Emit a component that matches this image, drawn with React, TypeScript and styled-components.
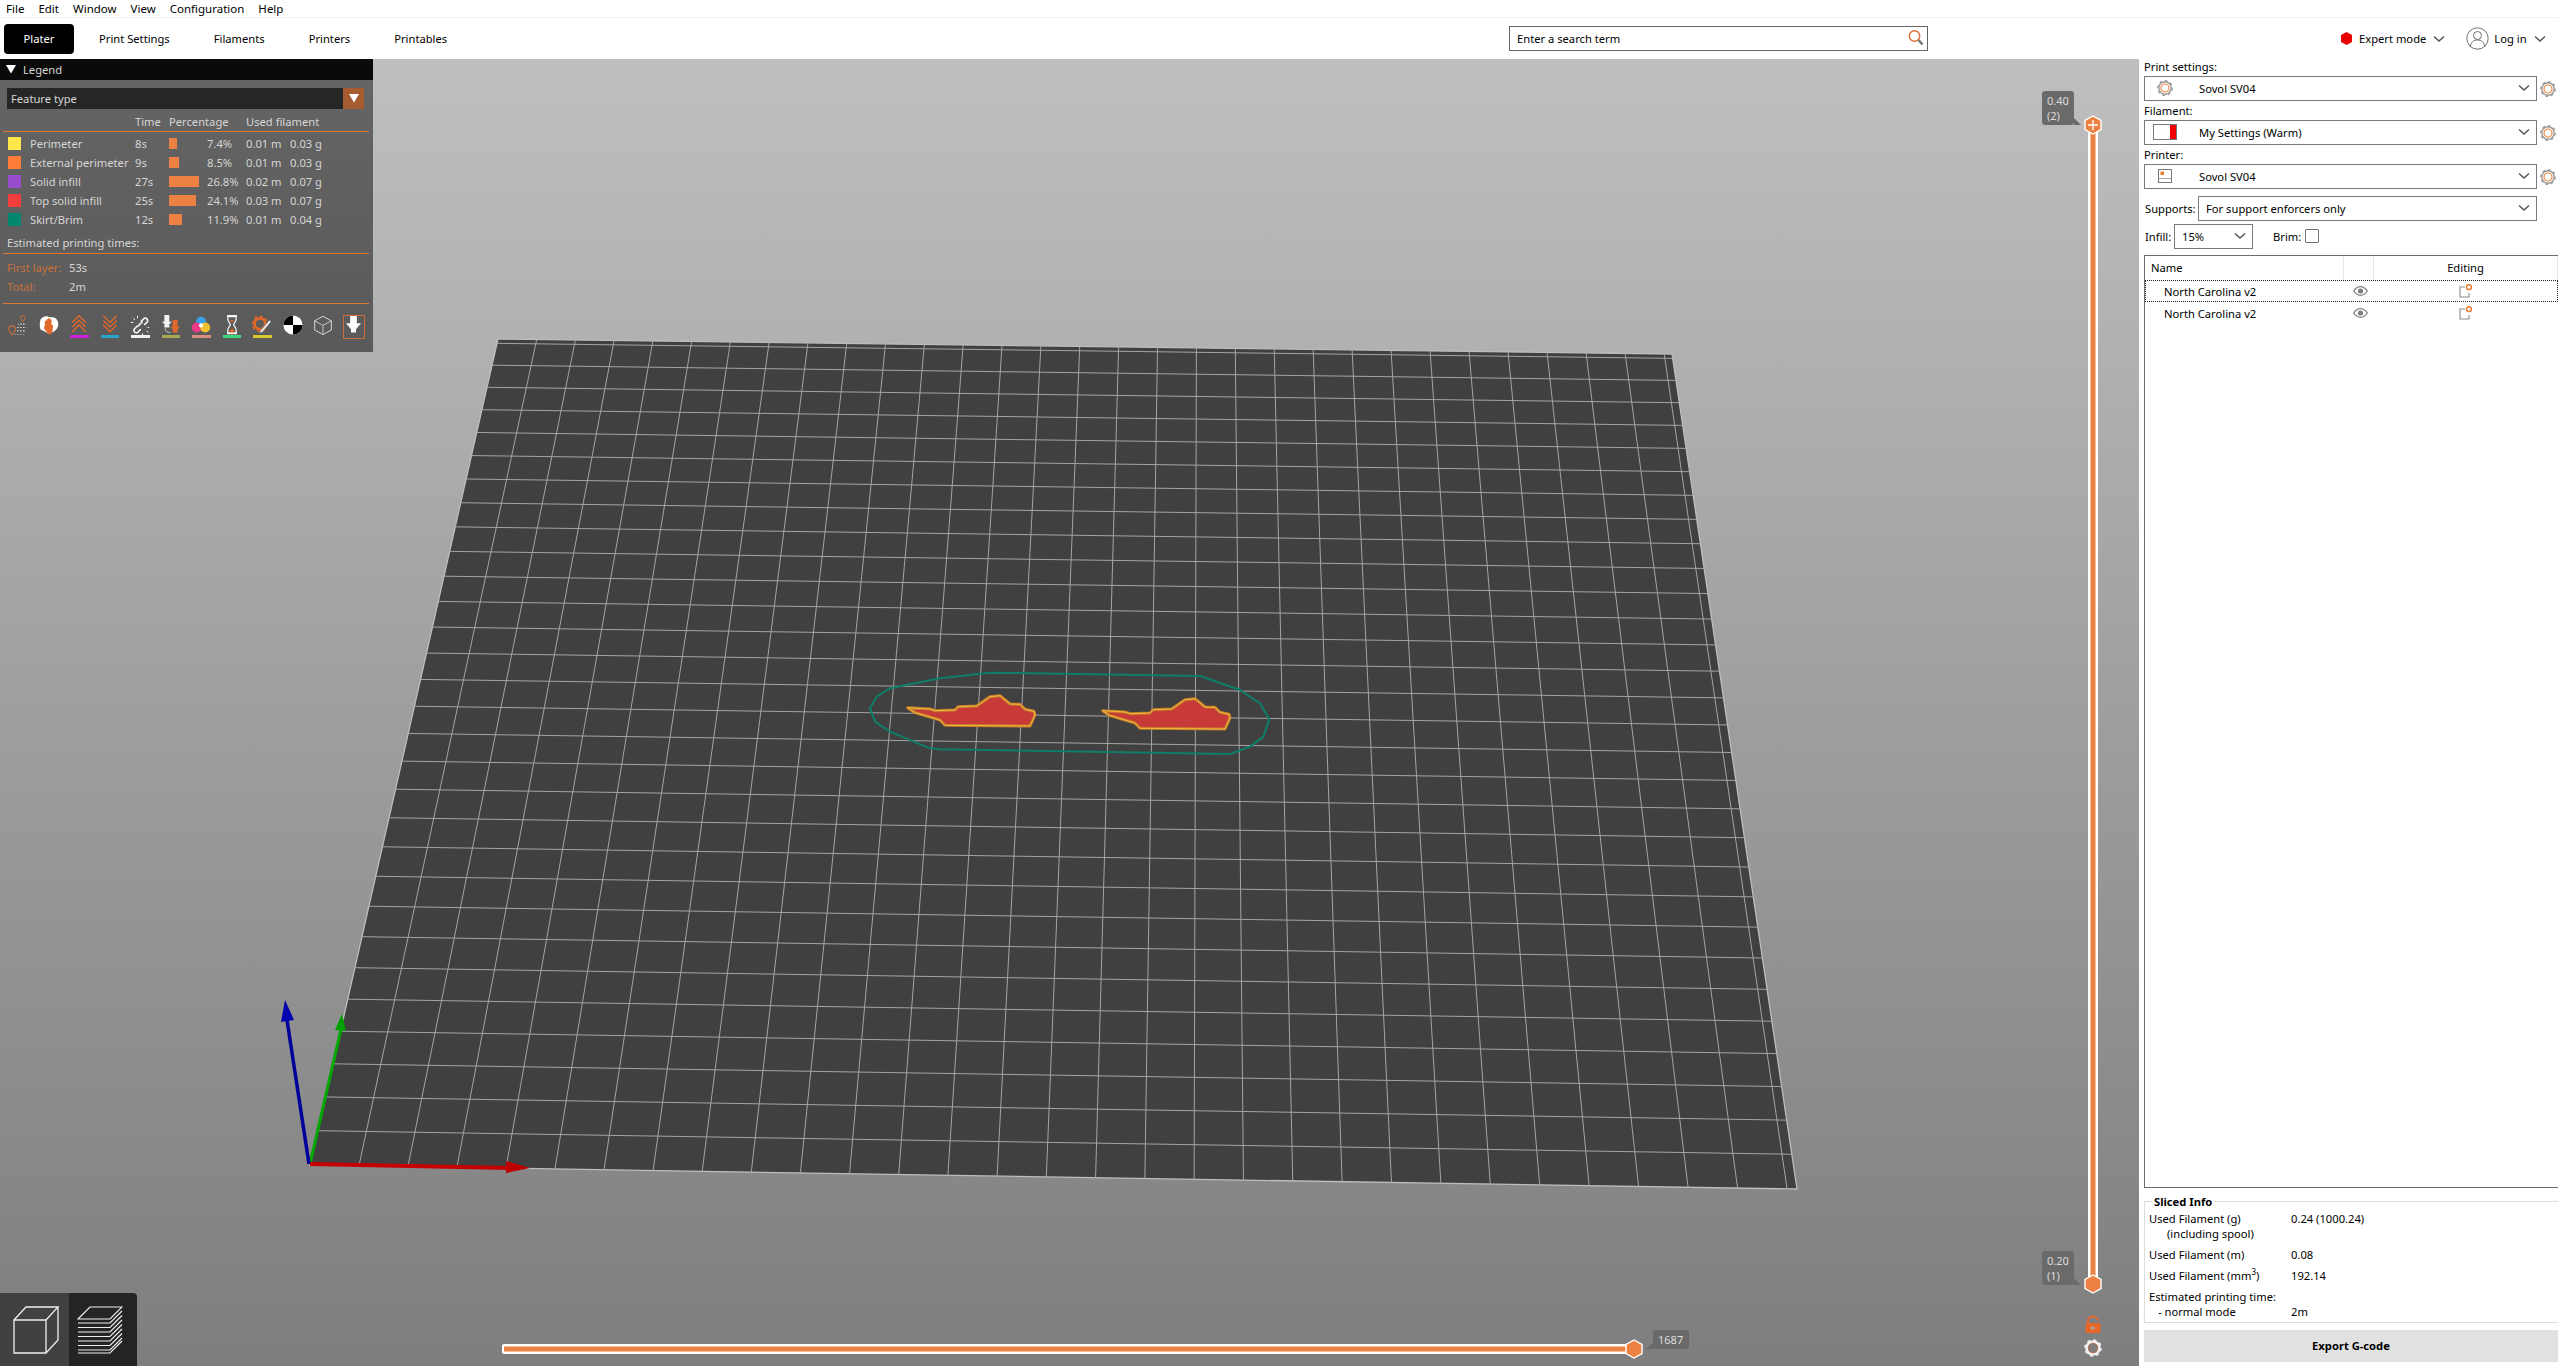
import { Fragment } from "react";
import styled, { createGlobalStyle } from "styled-components";
import type { ReactNode } from "react";

const UI_FONT = `"Noto Sans", "Open Sans", sans-serif`;

const GlobalStyle = createGlobalStyle`
  html, body { margin: 0; padding: 0; height: 100%; overflow: hidden; }
  body { font-family: ${UI_FONT}; font-size: 11.2px; color: #000; background: #fff; }
  #root { height: 100%; }
`;

/* ---------- window chrome ---------- */

const Page = styled.div`
  display: flex;
  flex-direction: column;
  height: 1366px;
  width: 2558px;
`;

const MenuBar = styled.div`
  display: flex;
  gap: 14px;
  height: 16px;
  padding-left: 6px;
  padding-bottom: 1px;
  box-sizing: content-box;
  margin-bottom: -1px;
  align-items: center;
  background: #fff;
  border-bottom: 2px solid #f0f0f0;
  font-size: 11.5px;
`;

const TabBar = styled.div`
  display: flex;
  align-items: center;
  height: 41px;
  background: #fff;
`;

const Tabs = styled.div`
  display: flex;
  align-items: center;
  padding-left: 4px;
  width: 1505px;
`;

const Tab = styled.div<{ $active?: boolean }>`
  height: 30px;
  line-height: 30px;
  text-align: center;
  width: ${({ $active }) => ($active ? "70px" : "auto")};
  margin-right: ${({ $active }) => ($active ? "25px" : "44px")};
  border-radius: 4px;
  background: ${({ $active }) => ($active ? "#000" : "transparent")};
  color: ${({ $active }) => ($active ? "#fff" : "#000")};
`;

const SearchBox = styled.div`
  width: 419px;
  height: 25px;
  box-sizing: border-box;
  border: 1px solid #666;
  display: flex;
  align-items: center;
  justify-content: space-between;
  padding: 0 2px 1px 7px;
`;

const ModeArea = styled.div`
  display: flex;
  align-items: center;
  margin-left: 412px;
`;

const ModeLabel = styled.span`
  margin: 0 6px;
`;

const UserSlot = styled.span`
  display: flex;
  margin: 0 -1px 0 20px;
`;

const Main = styled.div`
  flex: 1;
  display: flex;
  min-height: 0;
`;

/* ---------- 3D view ---------- */

const Viewport = styled.div`
  position: relative;
  width: 2139px;
  background: linear-gradient(#bfbfbf, #7e7e7e);
  overflow: hidden;
`;

const Scene = styled.svg`
  position: absolute;
  inset: 0;
  width: 100%;
  height: 100%;
`;

const SliderTip = styled.div<{ $x: number; $y: number; $w: number; $h: number }>`
  position: absolute;
  left: ${({ $x }) => $x}px;
  top: ${({ $y }) => $y}px;
  width: ${({ $w }) => $w}px;
  height: ${({ $h }) => $h}px;
  box-sizing: border-box;
  padding: 2px 5px;
  background: #6a6a6a;
  border-radius: 3px;
  color: #dcdcdc;
  font-size: 11px;
  line-height: 15px;
`;

const ViewToolbar = styled.div`
  position: absolute;
  left: 0;
  bottom: 0;
  display: flex;
  height: 73px;
  border-top-right-radius: 4px;
  overflow: hidden;
`;

const ViewButton = styled.div<{ $active?: boolean }>`
  width: ${({ $active }) => ($active ? "69px" : "68px")};
  box-sizing: border-box;
  padding: ${({ $active }) => ($active ? "0 0 0 3px" : "0 6px 0 0")};
  display: flex;
  align-items: center;
  justify-content: center;
  background: ${({ $active }) => ($active ? "#414141" : "#242424")};
`;

/* ---------- legend ---------- */

const Legend = styled.div`
  position: absolute;
  left: 0;
  top: 0;
  width: 373px;
  height: 293px;
  background: linear-gradient(#656565, #5a5a5a);
  color: #d6d6d6;
`;

const LegendTitle = styled.div`
  display: flex;
  align-items: center;
  gap: 7px;
  height: 21px;
  padding-left: 6px;
  background: #0a0a0a;
`;

const LegendCombo = styled.div`
  display: flex;
  justify-content: space-between;
  align-items: center;
  height: 21px;
  margin: 8px 9px 3px 7px;
  padding-left: 4px;
  background: #262626;
`;

const ComboArrow = styled.div`
  width: 21px;
  height: 21px;
  display: flex;
  align-items: center;
  justify-content: center;
  background: #a65b30;
`;

const LegendGrid = styled.div<{ $top?: number }>`
  display: grid;
  grid-template-columns: 22px 105px 34px 38px 39px 44px 1fr;
  padding-left: 8px;
  margin-top: ${({ $top }) => $top ?? 0}px;
  grid-auto-rows: 19px;
  align-items: center;
`;

const HeaderCell = styled.span<{ $span?: number }>`
  grid-column: span ${({ $span }) => $span ?? 1};
  white-space: nowrap;
`;

const Swatch = styled.span<{ $color: string }>`
  width: 13px;
  height: 13px;
  background: ${({ $color }) => $color};
`;

const Bar = styled.span`
  display: block;
  height: 11px;
  background: #ed8043;
`;

const Rule = styled.div<{ $top?: number }>`
  height: 1px;
  margin: ${({ $top }) => $top ?? 0}px 4px 0 3px;
  background: #e0762e;
`;

const EstimatedTitle = styled.div`
  height: 19px;
  line-height: 18px;
  padding-left: 7px;
  margin-top: 5px;
`;

const TimeRow = styled.div<{ $top?: number }>`
  display: flex;
  height: 19px;
  line-height: 19px;
  padding-left: 7px;
  margin-top: ${({ $top }) => $top ?? 0}px;
`;

const TimeLabel = styled.span`
  width: 62px;
  color: #c8703a;
`;

const IconBar = styled.div`
  display: flex;
  padding: 11px 0 0 3px;
`;

const IconCell = styled.div`
  position: relative;
  width: 30.5px;
  height: 24px;
  display: flex;
  justify-content: center;
  box-sizing: border-box;
`;

const IconLine = styled.span<{ $color: string }>`
  position: absolute;
  left: 6px;
  right: 6px;
  top: 20px;
  height: 2.5px;
  background: ${({ $color }) => $color};
`;

const SelectedFrame = styled.span`
  position: absolute;
  left: 4px;
  right: 4px;
  top: 0;
  height: 22px;
  border: 1px solid #c8703a;
`;

/* ---------- right sidebar ---------- */

const Sidebar = styled.aside`
  flex: 1;
  display: flex;
  flex-direction: column;
  background: #fff;
  padding: 0 0 4px 5px;
  min-width: 0;
`;

const PresetGroup = styled.div`
  margin-bottom: 2px;
`;

const PresetLabel = styled.div`
  height: 17px;
  line-height: 15px;
`;

const PresetRow = styled.div`
  display: flex;
  align-items: center;
`;

const Combo = styled.div<{ $width?: number }>`
  ${({ $width }) => ($width ? `width: ${$width}px;` : "flex: 1;")}
  height: 25px;
  box-sizing: border-box;
  border: 1px solid #7a7a7a;
  display: flex;
  align-items: center;
  justify-content: space-between;
  padding: 0 5px 1px 7px;
`;

const ComboValue = styled.div`
  display: flex;
  align-items: center;
`;

const PresetIcon = styled.span`
  width: 47px;
  margin-left: -2px;
  margin-right: 2px;
  display: flex;
  justify-content: center;
  padding-right: 17px;
  box-sizing: border-box;
`;

const GearSlot = styled.div`
  width: 21px;
  display: flex;
  justify-content: center;
`;

const OptionRow = styled.div<{ $top: number }>`
  display: flex;
  align-items: center;
  margin-top: ${({ $top }) => $top}px;
  padding-right: 21px;
`;

const OptionLabel = styled.span<{ $width: number }>`
  width: ${({ $width }) => $width}px;
  padding: 0 0 1px 1px;
  box-sizing: border-box;
`;

const BrimLabel = styled.span`
  margin: 0 4px 1px 20px;
`;

const CheckBox = styled.span`
  width: 14px;
  height: 14px;
  margin-bottom: 1px;
  box-sizing: border-box;
  border: 1px solid #777;
  border-radius: 1px;
`;

const ObjectTable = styled.div`
  flex: 1;
  margin-top: 6px;
  border: 1px solid #6e6e6e;
  border-right: 0;
`;

const TableHead = styled.div`
  display: grid;
  grid-template-columns: 199px 30px 1fr;
  height: 24px;
  line-height: 24px;
`;

const HeadCell = styled.div<{ $center?: boolean }>`
  border-right: 1px solid #e8e8e8;
  padding-left: ${({ $center }) => ($center ? 0 : 6)}px;
  text-align: ${({ $center }) => ($center ? "center" : "left")};
`;

const TableRow = styled.div<{ $focused?: boolean }>`
  display: grid;
  grid-template-columns: 199px 30px 1fr;
  align-items: center;
  height: 22px;
  box-sizing: border-box;
  border: 1px dotted ${({ $focused }) => ($focused ? "#222" : "transparent")};
`;

const RowName = styled.span`
  padding-left: 18px;
`;

const RowIcon = styled.span<{ $shift?: number }>`
  display: flex;
  justify-content: center;
  padding-right: ${({ $shift }) => $shift ?? 0}px;
`;

const SlicedBox = styled.div`
  margin-top: 13px;
  height: 122px;
  box-sizing: border-box;
  border: 1px solid #dcdcdc;
  border-right: 0;
`;

const SlicedTitle = styled.div`
  width: fit-content;
  margin: -8px 0 2px 7px;
  padding: 0 2px;
  background: #fff;
  font-weight: 700;
  line-height: 15px;
`;

const SlicedGrid = styled.div`
  display: grid;
  grid-template-columns: 142px 1fr;
  row-gap: 6px;
  padding-left: 4px;
  line-height: 15px;
`;

const Indented = styled.span<{ $indent: number }>`
  display: block;
  padding-left: ${({ $indent }) => $indent}px;
`;

const Cube = styled.sup`
  font-size: 8px;
  line-height: 0;
`;

const ExportButton = styled.div`
  margin-top: 7px;
  height: 32px;
  line-height: 32px;
  text-align: center;
  background: #e1e1e1;
  font-weight: 700;
`;

/* ---------- drawings ---------- */

type Pt = [number, number];

// 印刷ベッドの四隅（手前左, 手前右, 奥右, 奥左）から射影変換を作る
const makeBedProjection = (p0: Pt, p1: Pt, p2: Pt, p3: Pt) => {
  const dx1 = p1[0] - p2[0];
  const dx2 = p3[0] - p2[0];
  const sx = p0[0] - p1[0] + p2[0] - p3[0];
  const dy1 = p1[1] - p2[1];
  const dy2 = p3[1] - p2[1];
  const sy = p0[1] - p1[1] + p2[1] - p3[1];
  const den = dx1 * dy2 - dx2 * dy1;
  const g = (sx * dy2 - dx2 * sy) / den;
  const h = (dx1 * sy - sx * dy1) / den;
  const a = p1[0] - p0[0] + g * p1[0];
  const b = p3[0] - p0[0] + h * p3[0];
  const d = p1[1] - p0[1] + g * p1[1];
  const e = p3[1] - p0[1] + h * p3[1];
  return (u: number, v: number): Pt => {
    const w = g * u + h * v + 1;
    return [(a * u + b * v + p0[0]) / w, (d * u + e * v + p0[1]) / w];
  };
};

const BED: Pt[] = [[310, 1165], [1797, 1189], [1672, 354], [498, 339]];
const project = makeBedProjection(BED[0], BED[1], BED[2], BED[3]);
const CELL = 1 / 30.2;
const GRID_STEPS = Array.from({ length: 30 }, (_, i) => (i + 1) * CELL);

const toPoints = (pts: Pt[]) => pts.map(([x, y]) => `${x},${y}`).join(" ");

const fromZoom = (pts: Pt[], dx = 0, dy = 0) =>
  pts.map(([x, y]): Pt => [840 + (x + dx) / 3, 640 + (y + dy) / 3]);

const SKIRT = fromZoom([
  [90, 205], [110, 170], [150, 145], [300, 115], [450, 98], [1080, 108], [1200, 150], [1260, 190],
  [1288, 238], [1270, 290], [1230, 320], [1170, 342], [300, 328], [270, 325], [150, 275], [105, 245],
]);

const PART: Pt[] = [
  [203, 203], [270, 207], [285, 212], [345, 210], [355, 200], [410, 198], [450, 170], [480, 167],
  [510, 192], [540, 193], [555, 208], [582, 214], [585, 225], [570, 258], [315, 256], [300, 240],
  [260, 228], [225, 218],
];

const Part = ({ dx, dy }: { dx: number; dy: number }) => {
  const pts = toPoints(fromZoom(PART, dx, dy));
  return (
    <>
      <polygon points={pts} fill="#c73a38" stroke="#c9782c" strokeWidth={3} strokeLinejoin="round" />
      <polygon points={pts} fill="none" stroke="#efc43a" strokeWidth={0.9} strokeLinejoin="round" />
    </>
  );
};

const Thumb = ({ x, y }: { x: number; y: number }) => (
  <polygon
    points={toPoints([[x, y - 9], [x + 8, y - 4.5], [x + 8, y + 4.5], [x, y + 9], [x - 8, y + 4.5], [x - 8, y - 4.5]])}
    fill="#ed8043"
    stroke="#fff"
    strokeWidth={1.4}
  />
);

const SceneDrawing = () => (
  <Scene viewBox="0 59 2139 1307">
    <polygon points={toPoints(BED)} fill="#404040" stroke="#bdbdbd" strokeWidth={1.3} />
    {GRID_STEPS.map((t) => {
      const [a, b] = [project(t, 0), project(t, 1)];
      const [c, d] = [project(0, t), project(1, t)];
      return (
        <Fragment key={t}>
          <line x1={a[0]} y1={a[1]} x2={b[0]} y2={b[1]} stroke="#a4a4a4" strokeWidth={1} />
          <line x1={c[0]} y1={c[1]} x2={d[0]} y2={d[1]} stroke="#a4a4a4" strokeWidth={1} />
        </Fragment>
      );
    })}

    <polygon points={toPoints(SKIRT)} fill="none" stroke="#0d7f68" strokeWidth={2} strokeLinejoin="round" />
    <Part dx={0} dy={0} />
    <Part dx={585} dy={9} />

    {/* axes */}
    <line x1={310} y1={1164} x2={342} y2={1025} stroke="#00a800" strokeWidth={3} />
    <polygon points="342,1014 346,1031 335,1030" fill="#00a000" />
    <line x1={309} y1={1164} x2={287} y2={1020} stroke="#00009a" strokeWidth={3.5} />
    <polygon points="285,1000 294,1020 281,1022" fill="#0000b0" />
    <line x1={310} y1={1164} x2={510} y2={1168} stroke="#c40000" strokeWidth={4} />
    <polygon points="530,1168 506,1161 506,1173" fill="#c00000" />

    {/* layer slider */}
    <rect x={2088} y={125} width={10} height={1159} rx={2} fill="#fff" />
    <rect x={2090.5} y={125} width={5} height={1159} fill="#ed8043" />
    <Thumb x={2093} y={125} />
    <path d="M2093 120v10M2088 125h10" stroke="#fff" strokeWidth={1.4} />
    <Thumb x={2093} y={1284} />

    {/* move slider */}
    <rect x={502} y={1344} width={1132} height={10} rx={2} fill="#fff" />
    <rect x={504} y={1346.5} width={1130} height={5} fill="#ed8043" />
    <Thumb x={1634} y={1349} />

    {/* tooltip tails */}
    <polygon points="2074,1285 2081,1285 2074,1278" fill="#6a6a6a" />
    <polygon points="2074,125 2081,125 2074,118" fill="#6a6a6a" />
    <polygon points="1646,1349 1653,1349 1653,1343" fill="#6a6a6a" />

    {/* lock */}
    <path d="M2088 1323v-2.500a5 4 0 0 1 10 0" fill="none" stroke="#e8682a" strokeWidth={2} />
    <rect x={2085.5} y={1323} width={15} height={10} rx={2} fill="#e8682a" />
    <path d="M2091 1326l5 2-5 2z" fill="#a8a8a8" />
    <g transform="translate(2084 1339)">
      <circle cx={9} cy={9} r={6.5} fill="none" stroke="#f2f2f2" strokeWidth={2.6} />
      <circle cx={9} cy={9} r={8} fill="none" stroke="#f2f2f2" strokeWidth={1.6} strokeDasharray="3 3.3" />
      <circle cx={9} cy={9} r={4.6} fill="none" stroke="#e8682a" strokeWidth={1} strokeDasharray="2 1.5" />
    </g>
  </Scene>
);

const Chevron = () => (
  <svg width={14} height={8} viewBox="0 0 14 8">
    <path d="M2 1.5 7 6l5-4.5" fill="none" stroke="#555" strokeWidth={1.5} />
  </svg>
);

const Gear = () => (
  <svg width={16} height={16} viewBox="0 0 16 16">
    <circle cx={8} cy={8} r={6.2} fill="#fff" stroke="#9a9a9a" strokeWidth={1.4} />
    <circle cx={8} cy={8} r={7.2} fill="none" stroke="#9a9a9a" strokeWidth={1.4} strokeDasharray="2.6 3" />
    <circle cx={8} cy={8} r={4} fill="none" stroke="#ee8a4a" strokeWidth={1.2} />
  </svg>
);

const FilamentSwatch = () => (
  <svg width={24} height={16} viewBox="0 0 24 16">
    <rect x={0.5} y={0.5} width={23} height={15} fill="#fff" stroke="#777" />
    <rect x={17} y={1} width={6} height={14} fill="#f00000" />
  </svg>
);

const PrinterGlyph = () => (
  <svg width={14} height={14} viewBox="0 0 14 14">
    <rect x={0.5} y={0.5} width={13} height={13} fill="#fff" stroke="#777" />
    <path d="M1 9.5h12" stroke="#aaa" />
    <rect x={2.5} y={2.5} width={3.5} height={3.5} fill="#ed7a35" />
  </svg>
);

const Eye = () => (
  <svg width={15} height={10} viewBox="0 0 15 10">
    <path d="M.7 5C3 1.6 5.2.7 7.5.7S12 1.6 14.3 5C12 8.4 9.8 9.3 7.5 9.3S3 8.4.7 5Z" fill="#fff" stroke="#808080" strokeWidth={1.3} />
    <circle cx={7.5} cy={5} r={2.6} fill="#808080" />
  </svg>
);

const EditGlyph = () => (
  <svg width={14} height={14} viewBox="0 0 14 14">
    <path d="M6 3H1v10h9V9" fill="none" stroke="#8a8a8a" strokeWidth={1.1} />
    <circle cx={10} cy={3.2} r={2.4} fill="#fff" stroke="#ed7a35" strokeWidth={1.5} />
  </svg>
);

const SearchGlyph = () => (
  <svg width={18} height={18} viewBox="0 0 18 18">
    <circle cx={7.5} cy={7} r={5.2} fill="none" stroke="#e0703a" strokeWidth={1.5} />
    <path d="M11.5 11 15.5 15.5" stroke="#777" strokeWidth={2.6} />
  </svg>
);

const UserGlyph = () => (
  <svg width={23} height={23} viewBox="0 0 23 23">
    <circle cx={11.5} cy={11.5} r={10.7} fill="none" stroke="#707070" />
    <circle cx={11.5} cy={8.5} r={4} fill="none" stroke="#707070" />
    <path d="M4.5 19c.5-4 3-6 7-6s6.500 2 7 6" fill="none" stroke="#707070" />
  </svg>
);

const ModeDot = () => (
  <svg width={13} height={13} viewBox="0 0 13 13">
    <polygon points="6.500,0 12,3 12,10 6.500,13 1,10 1,3" fill="#e80000" />
  </svg>
);

const DownTriangle = ({ size }: { size: number }) => (
  <svg width={size} height={size * 0.85} viewBox="0 0 10 8.500">
    <polygon points="0,0 10,0 5,8.500" fill="#fff" />
  </svg>
);

const Nozzle = ({ color, x = 0, y = 0 }: { color: string; x?: number; y?: number }) => (
  <path
    transform={`translate(${x} ${y})`}
    d="M3 0h6v8h3l-4 4h1v3H3v-3h1L0 8h3Z"
    fill={color}
  />
);

const Glyph = ({ children }: { children: ReactNode }) => (
  <svg width={20} height={20} viewBox="0 0 24 24">{children}</svg>
);

const Chevrons = ({ up }: { up: boolean }) => (
  <g fill="none" stroke="#e0682a" strokeWidth={1.7} transform={up ? undefined : "matrix(1 0 0 -1 0 21)"}>
    <path d="M4 9 12 1l8 8" />
    <path d="M4 14.500 12 6.500l8 8" />
    <path d="M4 20 12 12l8 8" />
  </g>
);

const VIEW_ICONS: { line?: string; selected?: boolean; glyph: ReactNode }[] = [
  {
    glyph: (
      <Glyph>
        <path d="M5 24c-3-4-4-5-4-7a4 4 0 0 1 8 0c0 2-1 3-4 7Z" fill="none" stroke="#c8703a" strokeWidth={1.4} />
        <path d="M18 8c-2-3-2.500-3.500-2.500-5a2.500 2.500 0 0 1 5 0c0 1.500-.5 2-2.500 5Z" fill="none" stroke="#c8703a" strokeWidth={1.2} />
        <path d="M20 11h-8M11 15h11M11 19h10M7 24h14" stroke="#cfcfcf" strokeWidth={1.4} strokeDasharray="2 1.500" />
      </Glyph>
    ),
  },
  {
    glyph: (
      <Glyph>
        <path d="M2 5c3-3 6-4 9-3s7 0 9 2 4 5 3 9-2 4-4 6-6 3-8 3-3-2-6-3-4-2-4-6 0-5 1-8Z" fill="#fff" />
        <path d="M7 12V7h2v4-6h2v6-7h2v7-6h2v7h2l-1 8-2 3H11l-2-3-3-4Z" fill="#e0682a" />
      </Glyph>
    ),
  },
  { line: "#cf1fdc", glyph: <Glyph><Chevrons up /></Glyph> },
  { line: "#2aa5c9", glyph: <Glyph><Chevrons up={false} /></Glyph> },
  {
    line: "#f2f2f2",
    glyph: (
      <Glyph>
        <path d="M10 14l-4 4a3 3 0 0 0 4 4l4-4M14 9l4-4a3 3 0 0 1 4 4l-4 4" fill="none" stroke="#f2f2f2" strokeWidth={2} transform="translate(-1 -1)" />
        <path d="M9 14l6-6" stroke="#f2f2f2" strokeWidth={2} />
        <path d="M4 4l2 2M9 1v3M1 9h3M20 19l2 2M15 22v2M21 15h2" stroke="#f2f2f2" strokeWidth={1.2} />
      </Glyph>
    ),
  },
  {
    line: "#a8a855",
    glyph: (
      <Glyph>
        <Nozzle color="#f2f2f2" x={1} y={0} />
        <path d="M5 16c0 4 3 5 6 5" fill="none" stroke="#cfcfcf" strokeWidth={1.2} />
        <Nozzle color="#e0682a" x={11} y={6} />
      </Glyph>
    ),
  },
  {
    line: "#d98c80",
    glyph: (
      <Glyph>
        <circle cx={12} cy={8} r={6} fill="#3aa0e8" />
        <circle cx={7} cy={15} r={6} fill="#ee3a8a" />
        <circle cx={17} cy={15} r={6} fill="#f0c030" />
        <circle cx={12} cy={12.500} r={2.500} fill="#fff" />
      </Glyph>
    ),
  },
  {
    line: "#3ed67a",
    glyph: (
      <Glyph>
        <path d="M6 1h12M6 22h12" stroke="#f2f2f2" strokeWidth={2} />
        <path d="M7 2v3c0 3 3 5 3 6.500S7 15 7 18v3h10v-3c0-3-3-5-3-6.500S17 8 17 5V2Z" fill="none" stroke="#f2f2f2" strokeWidth={1.5} />
        <path d="M9 21c0-2 2-4 3-5 1 1 3 3 3 5ZM9.500 6h5l-2.500 3Z" fill="#e0682a" />
      </Glyph>
    ),
  },
  {
    line: "#d6c92e",
    glyph: (
      <Glyph>
        <circle cx={9.500} cy={10.500} r={6.500} fill="none" stroke="#e0682a" strokeWidth={3.500} />
        <circle cx={9.500} cy={10.500} r={9} fill="none" stroke="#e0682a" strokeWidth={2} strokeDasharray="3.500 3.500" />
        <path d="M10 19 21 6l2 2-11 13-3 1Z" fill="#f4f4f4" stroke="#5e5e5e" strokeWidth={0.8} />
      </Glyph>
    ),
  },
  {
    glyph: (
      <Glyph>
        <circle cx={12} cy={12} r={11.500} fill="#fff" />
        <path d="M12 .5A11.500 11.500 0 0 0 .5 12H12ZM12 23.500A11.500 11.500 0 0 0 23.500 12H12Z" fill="#000" />
      </Glyph>
    ),
  },
  {
    glyph: (
      <Glyph>
        <path d="M12 1.500 22 7v11l-10 5.500L2 18V7Z" fill="none" stroke="#d8d8d8" strokeWidth={1.2} />
        <path d="M2 7l10 5.500L22 7M12 12.500v11" fill="none" stroke="#d8d8d8" strokeWidth={1} />
      </Glyph>
    ),
  },
  {
    selected: true,
    glyph: (
      <svg width={15} height={20} viewBox="0 0 18 24">
        <path d="M5 0h8v10h5l-6 7v4h-6v-4l-6-7h5Z" fill="#fff" />
      </svg>
    ),
  },
];

const LEGEND_ROWS = [
  { name: "Perimeter", color: "#ffe64d", time: "8s", bar: 8, pct: "7.4%", m: "0.01 m", g: "0.03 g" },
  { name: "External perimeter", color: "#ff7d38", time: "9s", bar: 9.500, pct: "8.5%", m: "0.01 m", g: "0.03 g" },
  { name: "Solid infill", color: "#974dcc", time: "27s", bar: 30, pct: "26.8%", m: "0.02 m", g: "0.07 g" },
  { name: "Top solid infill", color: "#f23d3d", time: "25s", bar: 27, pct: "24.1%", m: "0.03 m", g: "0.07 g" },
  { name: "Skirt/Brim", color: "#00876e", time: "12s", bar: 13, pct: "11.9%", m: "0.01 m", g: "0.04 g" },
];

const PRESETS: { label: string; value: string; icon: ReactNode }[] = [
  { label: "Print settings:", value: "Sovol SV04", icon: <Gear /> },
  { label: "Filament:", value: "My Settings (Warm)", icon: <FilamentSwatch /> },
  { label: "Printer:", value: "Sovol SV04", icon: <PrinterGlyph /> },
];

const LegendPanel = () => (
  <Legend>
    <LegendTitle>
      <DownTriangle size={10} />
      <span>Legend</span>
    </LegendTitle>
    <LegendCombo>
      <span>Feature type</span>
      <ComboArrow>
        <DownTriangle size={10} />
      </ComboArrow>
    </LegendCombo>
    <LegendGrid>
      <HeaderCell $span={2} />
      <HeaderCell>Time</HeaderCell>
      <HeaderCell $span={2}>Percentage</HeaderCell>
      <HeaderCell $span={2}>Used filament</HeaderCell>
    </LegendGrid>
    <Rule />
    <LegendGrid $top={2}>
      {LEGEND_ROWS.map((row) => (
        <Fragment key={row.name}>
          <Swatch $color={row.color} />
          <span>{row.name}</span>
          <span>{row.time}</span>
          <Bar style={{ width: row.bar }} />
          <span>{row.pct}</span>
          <span>{row.m}</span>
          <span>{row.g}</span>
        </Fragment>
      ))}
    </LegendGrid>
    <EstimatedTitle>Estimated printing times:</EstimatedTitle>
    <Rule />
    <TimeRow $top={4}>
      <TimeLabel>First layer:</TimeLabel>
      <span>53s</span>
    </TimeRow>
    <TimeRow>
      <TimeLabel>Total:</TimeLabel>
      <span>2m</span>
    </TimeRow>
    <Rule $top={7} />
    <IconBar>
      {VIEW_ICONS.map((icon, i) => (
        <IconCell key={i}>
          {icon.glyph}
          {icon.line && <IconLine $color={icon.line} />}
          {icon.selected && <SelectedFrame />}
        </IconCell>
      ))}
    </IconBar>
  </Legend>
);

const SidebarPanel = () => (
  <Sidebar>
    {PRESETS.map((preset) => (
      <PresetGroup key={preset.label}>
        <PresetLabel>{preset.label}</PresetLabel>
        <PresetRow>
          <Combo>
            <ComboValue>
              <PresetIcon>{preset.icon}</PresetIcon>
              {preset.value}
            </ComboValue>
            <Chevron />
          </Combo>
          <GearSlot>
            <Gear />
          </GearSlot>
        </PresetRow>
      </PresetGroup>
    ))}
    <OptionRow $top={5}>
      <OptionLabel $width={54}>Supports:</OptionLabel>
      <Combo>
        <span>For support enforcers only</span>
        <Chevron />
      </Combo>
    </OptionRow>
    <OptionRow $top={3}>
      <OptionLabel $width={30}>Infill:</OptionLabel>
      <Combo $width={79}>
        <span>15%</span>
        <Chevron />
      </Combo>
      <BrimLabel>Brim:</BrimLabel>
      <CheckBox />
    </OptionRow>
    <ObjectTable>
      <TableHead>
        <HeadCell>Name</HeadCell>
        <HeadCell />
        <HeadCell $center>Editing</HeadCell>
      </TableHead>
      {[true, false].map((focused, i) => (
        <TableRow key={i} $focused={focused}>
          <RowName>North Carolina v2</RowName>
          <RowIcon>
            <Eye />
          </RowIcon>
          <RowIcon $shift={1}>
            <EditGlyph />
          </RowIcon>
        </TableRow>
      ))}
    </ObjectTable>
    <SlicedBox>
      <SlicedTitle>Sliced Info</SlicedTitle>
      <SlicedGrid>
        <span>
          Used Filament (g)
          <Indented $indent={18}>(including spool)</Indented>
        </span>
        <span>0.24 (1000.24)</span>
        <span>Used Filament (m)</span>
        <span>0.08</span>
        <span>
          Used Filament (mm<Cube>3</Cube>)
        </span>
        <span>192.14</span>
        <span>
          Estimated printing time:
          <Indented $indent={9}>- normal mode</Indented>
        </span>
        <span>
          <Indented $indent={0}>&nbsp;</Indented>
          2m
        </span>
      </SlicedGrid>
    </SlicedBox>
    <ExportButton>Export G-code</ExportButton>
  </Sidebar>
);

export default function App() {
  return (
    <Page>
      <GlobalStyle />
      <MenuBar>
        {["File", "Edit", "Window", "View", "Configuration", "Help"].map((item) => (
          <span key={item}>{item}</span>
        ))}
      </MenuBar>
      <TabBar>
        <Tabs>
          <Tab $active>Plater</Tab>
          <Tab>Print Settings</Tab>
          <Tab>Filaments</Tab>
          <Tab>Printers</Tab>
          <Tab>Printables</Tab>
        </Tabs>
        <SearchBox>
          <span>Enter a search term</span>
          <SearchGlyph />
        </SearchBox>
        <ModeArea>
          <ModeDot />
          <ModeLabel>Expert mode</ModeLabel>
          <Chevron />
          <UserSlot>
            <UserGlyph />
          </UserSlot>
          <ModeLabel>Log in</ModeLabel>
          <Chevron />
        </ModeArea>
      </TabBar>
      <Main>
        <Viewport>
          <SceneDrawing />
          <LegendPanel />
          <SliderTip $x={2042} $y={32} $w={32} $h={34}>
            0.40
            <br />
            (2)
          </SliderTip>
          <SliderTip $x={2042} $y={1192} $w={32} $h={34}>
            0.20
            <br />
            (1)
          </SliderTip>
          <SliderTip $x={1653} $y={1271} $w={36} $h={19}>
            1687
          </SliderTip>
          <ViewToolbar>
            <ViewButton $active>
              <svg width={46} height={48} viewBox="0 0 46 48">
                <path d="M1 14h32v33H1ZM1 14 13 1h32L33 14M45 1v33L33 47" fill="none" stroke="#eee" strokeWidth={1.3} />
              </svg>
            </ViewButton>
            <ViewButton>
              <svg width={46} height={48} viewBox="0 0 46 48">
                <path d="M1 13 13 1h32L33 13H1Z" fill="none" stroke="#eee" strokeWidth={1.2} />
                {[17, 21.500, 26, 30.500, 35, 39.500, 44, 47].map((y) => (
                  <path key={y} d={`M1 ${y}H33L45 ${y - 12}`} fill="none" stroke="#eee" strokeWidth={1.2} />
                ))}
              </svg>
            </ViewButton>
          </ViewToolbar>
        </Viewport>
        <SidebarPanel />
      </Main>
    </Page>
  );
}
